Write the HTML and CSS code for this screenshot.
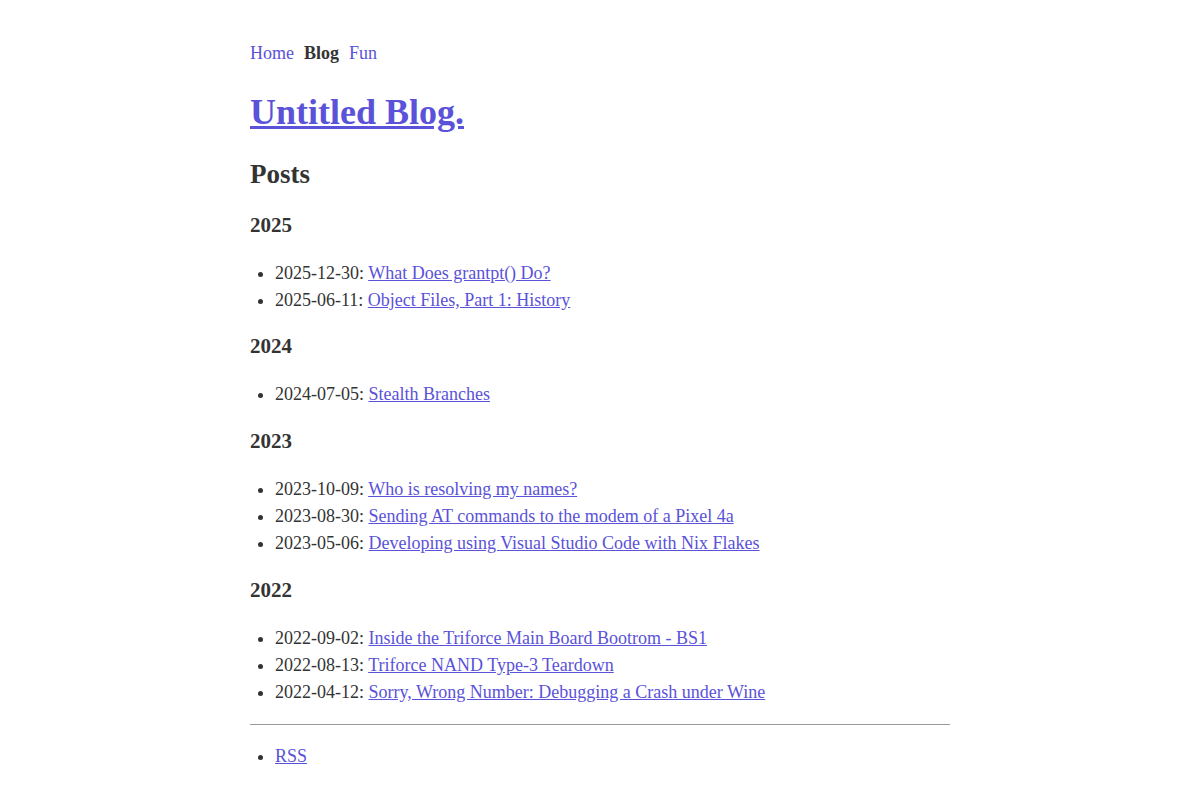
FILE: index.html
```html
<!DOCTYPE html>
<html lang="en">
<head>
<meta charset="utf-8">
<title>Untitled Blog.</title>
<link rel="stylesheet" href="styles.css">
</head>
<body>
<main class="page">
  <nav class="nav">
    <a href="#">Home</a>
    <strong>Blog</strong>
    <a href="#">Fun</a>
  </nav>
  <h1 class="title"><a href="#">Untitled Blog.</a></h1>
  <h2>Posts</h2>
  <h3>2025</h3>
  <ul>
    <li>2025-12-30: <a href="#">What Does grantpt() Do?</a></li>
    <li>2025-06-11: <a href="#">Object Files, Part 1: History</a></li>
  </ul>
  <h3>2024</h3>
  <ul>
    <li>2024-07-05: <a href="#">Stealth Branches</a></li>
  </ul>
  <h3>2023</h3>
  <ul>
    <li>2023-10-09: <a href="#">Who is resolving my names?</a></li>
    <li>2023-08-30: <a href="#">Sending AT commands to the modem of a Pixel 4a</a></li>
    <li>2023-05-06: <a href="#">Developing using Visual Studio Code with Nix Flakes</a></li>
  </ul>
  <h3>2022</h3>
  <ul>
    <li>2022-09-02: <a href="#">Inside the Triforce Main Board Bootrom - BS1</a></li>
    <li>2022-08-13: <a href="#">Triforce NAND Type-3 Teardown</a></li>
    <li>2022-04-12: <a href="#">Sorry, Wrong Number: Debugging a Crash under Wine</a></li>
  </ul>
  <hr class="rule">
  <ul class="footer">
    <li><a href="#">RSS</a></li>
  </ul>
</main>
</body>
</html>
```
FILE: styles.css
```css
html { background: #fff; }
body {
  margin: 0;
  padding: 40px 0;
  font-family: "Liberation Serif", "Times New Roman", serif;
  font-size: 18px;
  line-height: 1.5;
  color: #333;
}
.page {
  max-width: 700px;
  margin: 0 auto;
}
a { color: #5a52d8; }
.nav {
  display: flex;
  gap: 10px;
}
.nav a { text-decoration: none; }
.nav strong { color: #333; }
h1, h2, h3 { line-height: 1.2; color: #333; }
h1 { font-size: 36px; margin: 24px 0; }
h2 { font-size: 27px; margin: 24px 0 22px; }
h3 { font-size: 21px; margin: 20.5px 0 22px; }
ul { margin: 18px 0; padding-left: 25px; }
.rule {
  border: 0;
  border-top: 1px solid #999;
  margin: 17px 0 18px;
}
.footer { margin-top: 17px; }
```
